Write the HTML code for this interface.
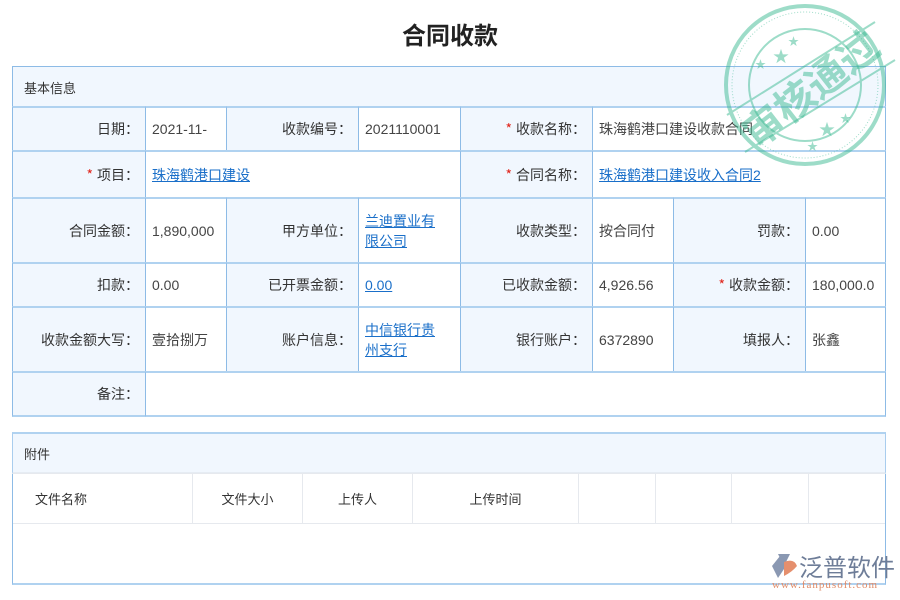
<!DOCTYPE html>
<html><head><meta charset="utf-8"><style>
*{margin:0;padding:0;box-sizing:border-box}
body{width:900px;height:600px;background:#fff;position:relative;overflow:hidden;font-family:"Liberation Sans","Noto Sans CJK SC",sans-serif;font-size:14px;color:#333}
.c{position:absolute;border:1px solid #8dbbe6;border-top:2px solid #b0d2f0;border-bottom:2px solid #b0d2f0;display:flex;align-items:center}
.l{background:#f1f7fe;justify-content:flex-end;padding-right:6px;font-family:"Noto Sans CJK SC",sans-serif}
.v{background:#fff;padding-left:6px;line-height:20px;color:#444}
a{color:#1a6fc9;text-decoration:underline}
.r{color:#e0241b;margin-right:4px}
.h{position:absolute;background:#f1f7fe;border:1px solid #a9cdee;display:flex;align-items:center;padding-left:11px;font-size:13px}
.t{position:absolute;border:1px solid #e6e9ee;background:#fff;display:flex;align-items:center;justify-content:center;font-size:13px}
</style></head><body>
<div style="position:absolute;left:0;top:16px;width:900px;text-align:center;font-size:24px;font-weight:bold;color:#222">合同收款</div>

<div class="h" style="left:12px;top:66px;width:874px;height:42px">基本信息</div>
<div style="position:absolute;left:12px;top:66px;width:874px;height:350px;border:1px solid #8dbbe6;border-bottom:2px solid #b0d2f0"></div>

<div class="c l" style="left:12px;top:106px;width:134px;height:46px">日期：</div>
<div class="c v" style="left:145px;top:106px;width:82px;height:46px">2021-11-</div>
<div class="c l" style="left:226px;top:106px;width:133px;height:46px">收款编号：</div>
<div class="c v" style="left:358px;top:106px;width:103px;height:46px">2021110001</div>
<div class="c l" style="left:460px;top:106px;width:133px;height:46px"><span class="r">*</span>收款名称：</div>
<div class="c v" style="left:592px;top:106px;width:294px;height:46px">珠海鹤港口建设收款合同</div>

<div class="c l" style="left:12px;top:150px;width:134px;height:49px"><span class="r">*</span>项目：</div>
<div class="c v" style="left:145px;top:150px;width:316px;height:49px"><a>珠海鹤港口建设</a></div>
<div class="c l" style="left:460px;top:150px;width:133px;height:49px"><span class="r">*</span>合同名称：</div>
<div class="c v" style="left:592px;top:150px;width:294px;height:49px"><a>珠海鹤港口建设收入合同2</a></div>

<div class="c l" style="left:12px;top:197px;width:134px;height:67px">合同金额：</div>
<div class="c v" style="left:145px;top:197px;width:82px;height:67px">1,890,000</div>
<div class="c l" style="left:226px;top:197px;width:133px;height:67px">甲方单位：</div>
<div class="c v" style="left:358px;top:197px;width:103px;height:67px"><a>兰迪置业有<br>限公司</a></div>
<div class="c l" style="left:460px;top:197px;width:133px;height:67px">收款类型：</div>
<div class="c v" style="left:592px;top:197px;width:82px;height:67px">按合同付</div>
<div class="c l" style="left:673px;top:197px;width:133px;height:67px">罚款：</div>
<div class="c v" style="left:805px;top:197px;width:81px;height:67px">0.00</div>

<div class="c l" style="left:12px;top:262px;width:134px;height:46px">扣款：</div>
<div class="c v" style="left:145px;top:262px;width:82px;height:46px">0.00</div>
<div class="c l" style="left:226px;top:262px;width:133px;height:46px">已开票金额：</div>
<div class="c v" style="left:358px;top:262px;width:103px;height:46px"><a>0.00</a></div>
<div class="c l" style="left:460px;top:262px;width:133px;height:46px">已收款金额：</div>
<div class="c v" style="left:592px;top:262px;width:82px;height:46px">4,926.56</div>
<div class="c l" style="left:673px;top:262px;width:133px;height:46px"><span class="r">*</span>收款金额：</div>
<div class="c v" style="left:805px;top:262px;width:81px;height:46px;white-space:nowrap;overflow:hidden">180,000.0</div>

<div class="c l" style="left:12px;top:306px;width:134px;height:67px">收款金额大写：</div>
<div class="c v" style="left:145px;top:306px;width:82px;height:67px">壹拾捌万</div>
<div class="c l" style="left:226px;top:306px;width:133px;height:67px">账户信息：</div>
<div class="c v" style="left:358px;top:306px;width:103px;height:67px"><a>中信银行贵<br>州支行</a></div>
<div class="c l" style="left:460px;top:306px;width:133px;height:67px">银行账户：</div>
<div class="c v" style="left:592px;top:306px;width:82px;height:67px">6372890</div>
<div class="c l" style="left:673px;top:306px;width:133px;height:67px">填报人：</div>
<div class="c v" style="left:805px;top:306px;width:81px;height:67px">张鑫</div>

<div class="c l" style="left:12px;top:371px;width:134px;height:46px">备注：</div>
<div class="c v" style="left:145px;top:371px;width:741px;height:46px"></div>

<div style="position:absolute;left:12px;top:432px;width:874px;height:153px;border:1px solid #8dbbe6;border-bottom:2px solid #b0d2f0;border-top:2px solid #b0d2f0"></div>
<div class="h" style="left:12px;top:432px;width:874px;height:42px;border-top:2px solid #b0d2f0;border-bottom:2px solid #e6ecf3">附件</div>
<div class="t" style="left:13px;top:473px;width:180px;height:51px;justify-content:flex-start;padding-left:22px;border-left:none">文件名称</div>
<div class="t" style="left:192px;top:473px;width:111px;height:51px">文件大小</div>
<div class="t" style="left:302px;top:473px;width:111px;height:51px">上传人</div>
<div class="t" style="left:412px;top:473px;width:167px;height:51px">上传时间</div>
<div class="t" style="left:578px;top:473px;width:78px;height:51px"></div>
<div class="t" style="left:655px;top:473px;width:77px;height:51px"></div>
<div class="t" style="left:731px;top:473px;width:78px;height:51px"></div>
<div class="t" style="left:808px;top:473px;width:77px;height:51px;border-right:none"></div>

<svg style="position:absolute;left:715px;top:0" width="185" height="175" viewBox="0 0 185 175">
<g opacity="0.5" fill="none" stroke="#3dba93">
<circle cx="90" cy="85" r="79" stroke-width="4"/>
<circle cx="90" cy="85" r="73" stroke-width="1" stroke-dasharray="1 2"/>
<circle cx="90" cy="85" r="56" stroke-width="2"/>
<line x1="12" y1="115" x2="160" y2="22" stroke-width="2"/>
<line x1="30" y1="152" x2="180" y2="60" stroke-width="2"/>
</g>
<g fill="#3dba93" opacity="0.5">
<text x="0" y="0" transform="translate(98,92) rotate(-38)" text-anchor="middle" dominant-baseline="middle" font-family="Noto Sans CJK SC,sans-serif" font-weight="bold" font-size="40">审核通过</text>
<text x="58" y="62" font-size="16">★</text><text x="40" y="68" font-size="11">★</text><text x="73" y="45" font-size="11">★</text>
<text x="104" y="135" font-size="16">★</text><text x="125" y="122" font-size="11">★</text><text x="92" y="150" font-size="11">★</text>
</g>
</svg>

<svg style="position:absolute;left:770px;top:552px" width="30" height="28" viewBox="0 0 30 28">
<path d="M8 2 L20 2 L14 14 Z" fill="#8a98b2"/><path d="M2 14 L10 4 L16 14 L8 26 Z" fill="#8a98b2"/><path d="M14 10 Q24 6 27 14 Q22 20 14 24 Z" fill="#e58f6d"/>
</svg>
<div style="position:absolute;left:799px;top:552px;font-size:24px;color:#6e7d98;font-family:'Noto Sans CJK SC',sans-serif;line-height:28px">泛普软件</div>
<div style="position:absolute;left:772px;top:579px;font-size:11px;color:#e08a66;font-family:'Liberation Serif',serif;letter-spacing:1px">www.fanpusoft.com</div>
</body></html>
